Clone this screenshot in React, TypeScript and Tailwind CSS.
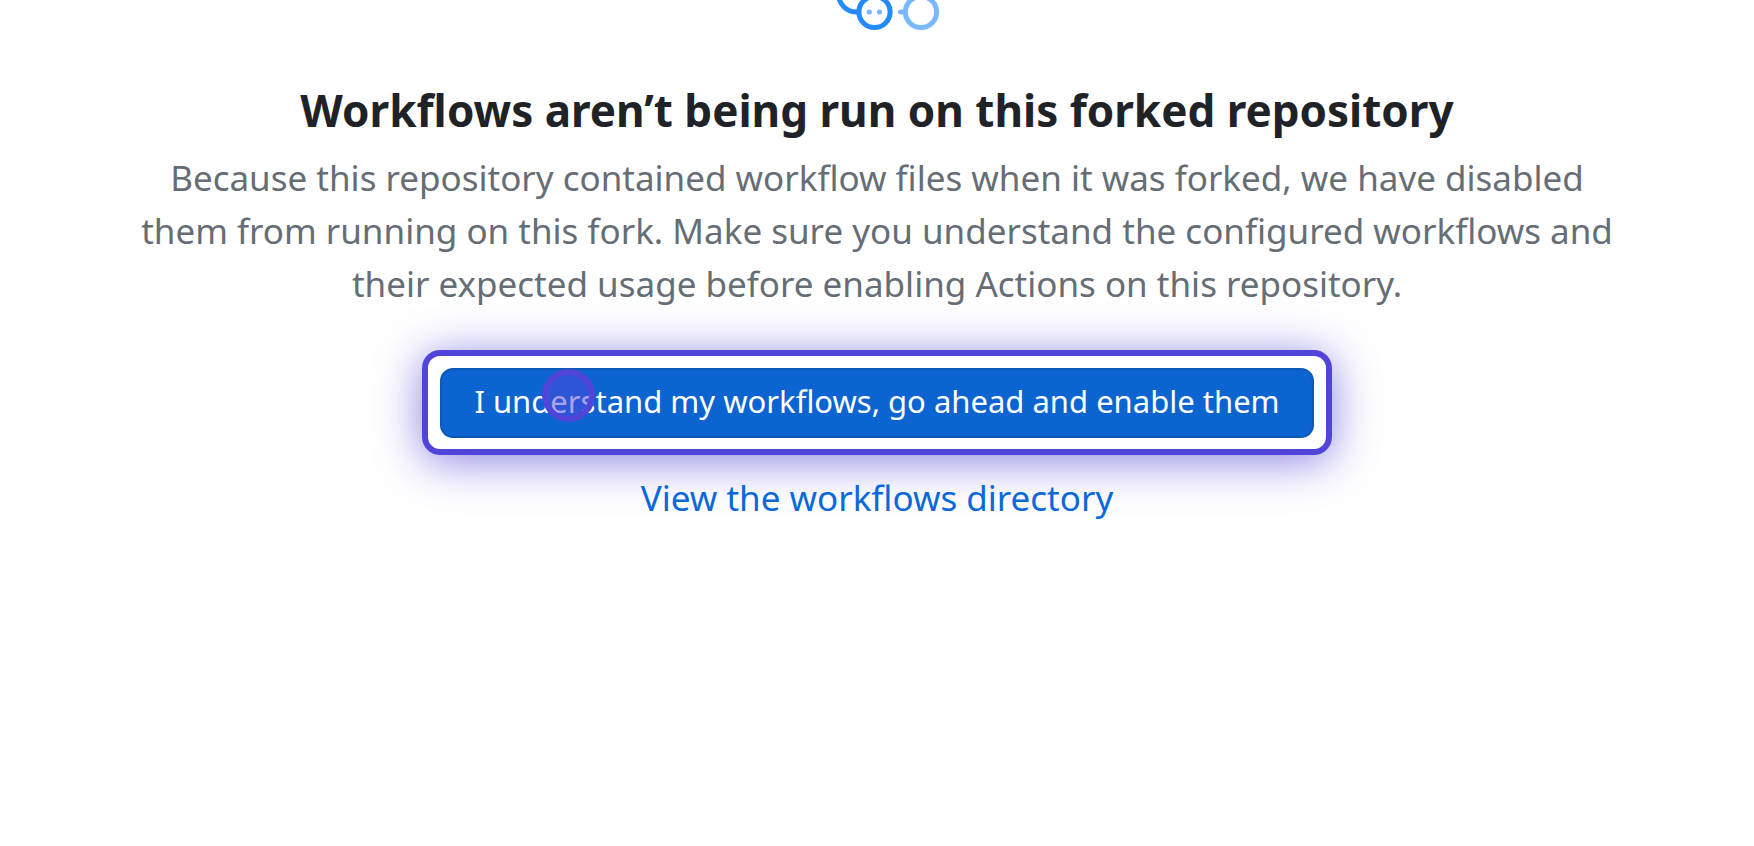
export default function App() {
  return (
    <main className="flex min-h-screen flex-col items-center bg-white font-['Noto_Sans',sans-serif] text-[#656d76]">
      <svg width="106" height="32" viewBox="0 0 106 32" fill="none" strokeWidth="5" aria-hidden="true" className="ml-6">
        <path d="M2.5 -6A18 18 0 0 0 20.5 12H22" stroke="#218bff" />
        <circle cx="38.5" cy="12" r="15.6" stroke="#218bff" />
        <circle cx="33.3" cy="12" r="2.6" fill="#79b8ff" />
        <circle cx="43.5" cy="12" r="2.6" fill="#79b8ff" />
        <path d="M64.5 12H69" stroke="#79b8ff" strokeLinecap="round" />
        <circle cx="85" cy="12" r="15.6" stroke="#79b8ff" />
      </svg>
      <section className="flex w-full max-w-[1520px] flex-col items-center px-4 pt-[45px] text-center">
        <h1 className="text-[44px] leading-[66px] font-bold text-[#1f2328]">Workflows aren’t being run on this forked repository</h1>
        <p className="mt-2 text-[35px] leading-[53px]">
          Because this repository contained workflow files when it was forked, we have disabled them from running on this fork. Make sure you understand the configured workflows and their expected usage before enabling Actions on this repository.
        </p>
        <div className="relative mt-10 rounded-[18px] border-6 border-[#5145d9] px-3 pt-3 pb-[11px] shadow-[0_6px_46px_rgba(81,69,217,0.68)]">
          <button type="button" className="block h-[70px] rounded-[13px] border-2 border-[#0b5ab8] bg-[#0b64d0] px-8 pb-1 text-[31px] text-white">
            I understand my workflows, go ahead and enable them
          </button>
          <span className="absolute top-[13px] left-[114px] size-[53px] rounded-full border-6 border-[#5145d9] bg-[#5145d9]/50" />
        </div>
        <a href="#workflows" className="relative mt-4 text-[35px] leading-[53px] text-[#0969da]">View the workflows directory</a>
      </section>
    </main>
  );
}
